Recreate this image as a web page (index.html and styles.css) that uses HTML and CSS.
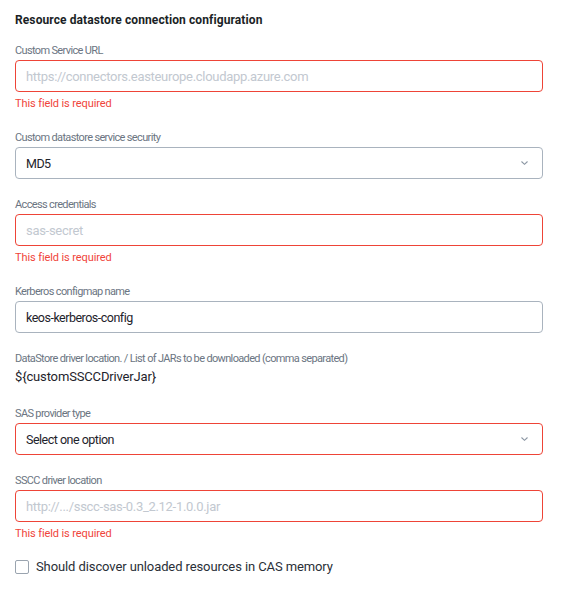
FILE: index.html
```html
<!DOCTYPE html>
<html lang="en">
<head>
<meta charset="utf-8">
<title>Resource datastore connection configuration</title>
<link rel="stylesheet" href="styles.css">
</head>
<body>
<form class="form">
  <h2 class="title">Resource datastore connection configuration</h2>

  <div class="field">
    <label class="label">Custom Service URL</label>
    <div class="box box-error"><span class="placeholder">https://connectors.easteurope.cloudapp.azure.com</span></div>
    <div class="error">This field is required</div>
  </div>

  <div class="field">
    <label class="label">Custom datastore service security</label>
    <div class="box select"><span class="value">MD5</span>
      <svg class="chev" width="9" height="6" viewBox="0 0 9 6"><path d="M1.5 1.5 L4.5 4.3 L7.5 1.5" fill="none" stroke="#8b96a3" stroke-width="1.1"/></svg>
    </div>
  </div>

  <div class="field">
    <label class="label">Access credentials</label>
    <div class="box box-error"><span class="placeholder">sas-secret</span></div>
    <div class="error">This field is required</div>
  </div>

  <div class="field">
    <label class="label">Kerberos configmap name</label>
    <div class="box"><span class="value">keos-kerberos-config</span></div>
  </div>

  <div class="field field-static">
    <label class="label">DataStore driver location. / List of JARs to be downloaded (comma separated)</label>
    <div class="static">${customSSCCDriverJar}</div>
  </div>

  <div class="field">
    <label class="label">SAS provider type</label>
    <div class="box box-error select"><span class="value">Select one option</span>
      <svg class="chev" width="9" height="6" viewBox="0 0 9 6"><path d="M1.5 1.5 L4.5 4.3 L7.5 1.5" fill="none" stroke="#8b96a3" stroke-width="1.1"/></svg>
    </div>
  </div>

  <div class="field">
    <label class="label">SSCC driver location</label>
    <div class="box box-error"><span class="placeholder">http://.../sscc-sas-0.3_2.12-1.0.0.jar</span></div>
    <div class="error">This field is required</div>
  </div>

  <label class="check">
    <span class="checkbox"></span>
    <span class="check-text">Should discover unloaded resources in CAS memory</span>
  </label>
</form>
</body>
</html>
```

FILE: styles.css
```css
* { box-sizing: border-box; }
html, body { margin: 0; padding: 0; background: #ffffff; }
body { font-family: Roboto, "Noto Sans", "Liberation Sans", sans-serif; color: #1e232b; }

.form {
  width: 558px;
  padding: 12px 15px 0 15px;
  display: flex;
  flex-direction: column;
}

.title {
  margin: 0 0 14px 0;
  font-size: 12px;
  line-height: 16px;
  font-weight: 700;
  letter-spacing: 0.1px;
  color: #1b1f26;
}

.field {
  display: flex;
  flex-direction: column;
  margin-bottom: 17px;
}

.label {
  font-size: 11px;
  line-height: 16px;
  letter-spacing: -0.65px;
  color: #6b7582;
  padding-top: 1px;
  margin-bottom: 1px;
}

.box {
  height: 32px;
  border: 1px solid #a9b3be;
  border-radius: 4px;
  padding: 0 10px;
  display: flex;
  align-items: center;
  font-size: 13px;
  letter-spacing: -0.3px;
}

.box-error { border-color: #ee4437; }

.select { justify-content: space-between; padding-right: 13px; }

.placeholder { color: #c2c8d0; }
.value { color: #1e232b; font-size: 12.5px; letter-spacing: -0.5px; }

.chev { display: block; }

.error {
  margin-top: 4px;
  margin-bottom: 0;
  font-size: 11px;
  line-height: 16px;
  letter-spacing: -0.1px;
  color: #f0443a;
}

.field-static { margin-bottom: 20px; }
.field-static .label { margin-bottom: 2px; }
.static {
  font-size: 13px;
  line-height: 16px;
  letter-spacing: -0.15px;
  color: #1e232b;
}

.check {
  display: flex;
  align-items: center;
  gap: 7px;
  margin-top: 0;
  font-size: 13px;
  line-height: 16px;
  letter-spacing: -0.1px;
  color: #2a2f37;
}

.checkbox {
  width: 14px;
  height: 14px;
  border: 1px solid #9aa4af;
  border-radius: 2px;
  background: #fff;
}
```
